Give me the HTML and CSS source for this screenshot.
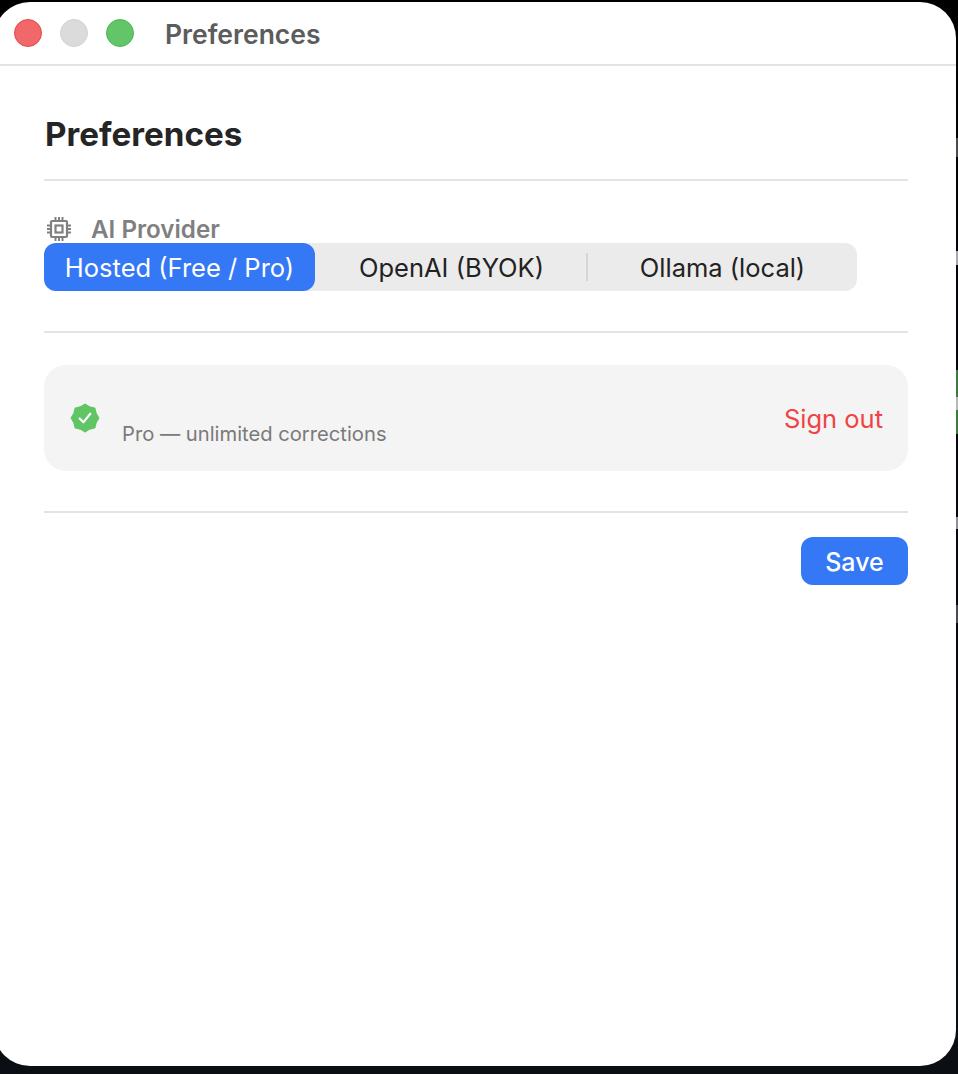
FILE: index.html
```html
<!DOCTYPE html>
<html lang="en">
<head>
<meta charset="utf-8">
<title>Preferences</title>
<link rel="stylesheet" href="styles.css">
</head>
<body>
<div class="window">
  <header class="titlebar">
    <span class="light light-red"></span>
    <span class="light light-gray"></span>
    <span class="light light-green"></span>
    <span class="title">Preferences</span>
  </header>
  <main class="content">
    <h1 class="heading">Preferences</h1>
    <hr class="rule rule-first">
    <section class="provider">
      <div class="label">
        <svg class="chip" viewBox="0 0 24 24" width="24" height="24" fill="none" stroke="#808080" stroke-width="2.200">
          <rect x="4" y="4" width="16" height="16" rx="1"/>
          <rect x="8.500" y="8.500" width="7" height="7"/>
          <path d="M8.500 0v3M12 0v3M15.500 0v3M8.500 21v3M12 21v3M15.500 21v3M0 8.500h3M0 12h3M0 15.500h3M21 8.500h3M21 12h3M21 15.500h3" stroke-width="2"/>
        </svg>
        <span>AI Provider</span>
      </div>
      <div class="segments">
        <div class="segment segment-active">Hosted (Free / Pro)</div>
        <div class="segment segment-openai">OpenAI (BYOK)</div>
        <div class="divider"></div>
        <div class="segment">Ollama (local)</div>
      </div>
    </section>
    <hr class="rule rule-second">
    <section class="card">
      <svg class="badge" viewBox="0 0 30 30" width="32" height="32">
        <path fill="#5fc565" stroke="#5fc565" stroke-width="2" stroke-linejoin="round" d="M15 2.500L19.130 5.020 23.840 6.160 24.980 10.870 27.500 15 24.980 19.130 23.840 23.840 19.130 24.980 15 27.500 10.870 24.980 6.160 23.840 5.020 19.130 2.500 15 5.020 10.870 6.160 6.160 10.870 5.020Z"/>
        <path fill="none" stroke="#fff" stroke-width="2" stroke-linecap="round" stroke-linejoin="round" d="M10 15.500l3.500 3.500 6.500-8"/>
      </svg>
      <div class="plan">Pro — unlimited corrections</div>
      <div class="signout">Sign out</div>
    </section>
    <hr class="rule rule-third">
    <div class="actions">
      <button class="save" type="button">Save</button>
    </div>
  </main>
</div>
<div class="edge edge-a"></div>
<div class="edge edge-b"></div>
<div class="edge edge-c"></div>
<div class="edge edge-d"></div>
<div class="edge edge-e"></div>
</body>
</html>
```
FILE: styles.css
```css
* { box-sizing: border-box; }
html, body { margin: 0; height: 100%; }
body {
  background: linear-gradient(#000 0, #05060a 30%, #0b0e13 100%);
  font-family: Inter, "Liberation Sans", sans-serif;
  padding-top: 2px;
  overflow: hidden;
  position: relative;
}
.window {
  width: 962px;
  height: 1064px;
  margin-left: -6px;
  background: #fff;
  border-radius: 36px;
  overflow: hidden;
}
.titlebar {
  height: 64px;
  border-bottom: 2px solid #e3e3e3;
  display: flex;
  align-items: center;
  padding-left: 20px;
}
.light {
  width: 28px;
  height: 28px;
  border-radius: 50%;
  margin-right: 18px;
  border: 1px solid;
}
.light-red { background: #f0686a; border-color: #e5484a; }
.light-gray { background: #dbdbdb; border-color: #d2d2d2; }
.light-green { background: #62c668; border-color: #4cb552; }
.title {
  margin: 2px 0 0 13px;
  font-size: 26.500px;
  font-weight: 600;
  color: #5c5c5c;
}
.content { padding: 0 48px 0 50px; }
.heading {
  margin: 0;
  padding: 46px 0 0 1px;
  height: 113px;
  font-size: 33.200px;
  line-height: 44px;
  font-weight: 700;
  color: #252525;
}
.rule {
  border: 0;
  height: 2px;
  margin: 0;
  background: #e3e3e3;
}
.provider { padding-top: 34px; }
.label {
  display: flex;
  align-items: center;
  height: 28px;
  font-size: 24.200px;
  font-weight: 600;
  color: #808080;
}
.chip { margin-left: 3px; margin-right: 20px; flex: none; }
.segments {
  width: 813px;
  height: 48px;
  display: flex;
  align-items: center;
  background: #ebebeb;
  border-radius: 12px;
  font-size: 25.500px;
  color: #222;
}
.segment {
  height: 100%;
  display: flex;
  align-items: center;
  justify-content: center;
  flex: 0 0 271px;
}
.segment:last-child { flex: 1; }
.segment-openai { padding-left: 2px; }
.segment-active {
  background: #3478f6;
  color: #fff;
  border-radius: 12px;
}
.divider { width: 2px; height: 28px; background: #d6d6d6; }
.rule-second { margin-top: 40px; }
.card {
  margin-top: 32px;
  height: 106px;
  background: #f4f4f4;
  border-radius: 22px;
  display: flex;
  align-items: flex-start;
}
.badge { margin: 37px 0 0 25px; flex: none; }
.plan {
  margin: 57px 0 0 21px;
  font-size: 20.200px;
  line-height: 24px;
  color: #7a7a7a;
}
.signout {
  margin: 38px 25px 0 auto;
  font-size: 25.500px;
  line-height: 32px;
  color: #ef4444;
}
.rule-third { margin-top: 40px; }
.actions {
  display: flex;
  justify-content: flex-end;
  padding-top: 24px;
}
.save {
  width: 107px;
  height: 48px;
  border: 0;
  border-radius: 12px;
  background: #3478f6;
  color: #fff;
  font-family: inherit;
  font-size: 25px;
  font-weight: 500;
  padding: 2px 0 0;
}
.edge { position: absolute; left: 956px; width: 2px; }
.edge-a { top: 138px; height: 19px; background: #4a4b4f; }
.edge-b { top: 251px; height: 14px; background: #a8a8ac; }
.edge-c { top: 370px; height: 64px; background: linear-gradient(#3c7a3e 0 42%, #b5b8b5 42% 62%, #3c7a3e 62%); }
.edge-d { top: 517px; height: 12px; background: #8f9094; }
.edge-e { top: 605px; height: 18px; background: #4a4b4f; }
```
